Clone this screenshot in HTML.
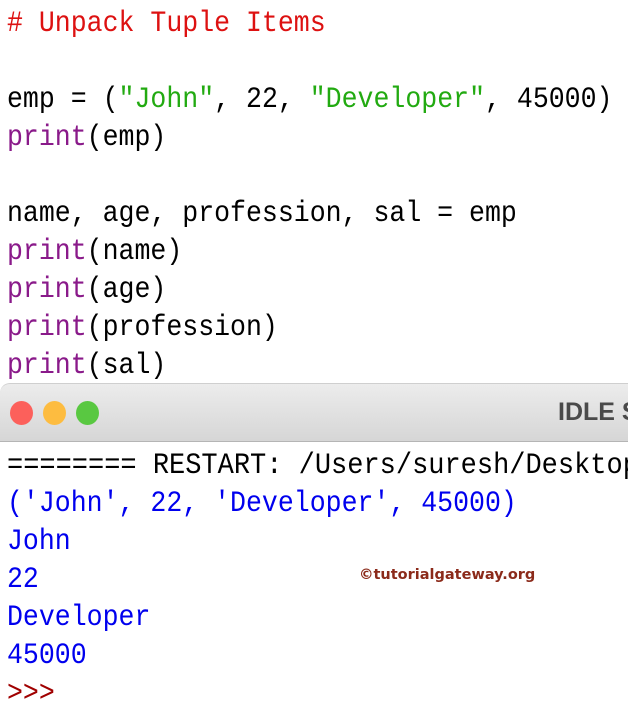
<!DOCTYPE html>
<html><head><style>
body{margin:0;width:628px;height:699px;overflow:hidden;background:#fff;position:relative;font-family:"Liberation Mono",monospace;}
.l{position:absolute;left:7px;font-size:30px;line-height:38px;white-space:pre;color:#000;transform:scaleX(0.885);transform-origin:0 0;}
.r{color:#dd1111}.g{color:#22aa11}.p{color:#8a1a8a}.b{color:#0000ee}.m{color:#a00000}
#bar{position:absolute;left:0;top:383px;width:640px;height:57px;background:linear-gradient(#ececec,#d6d6d6);border-top:1px solid #cfcfcf;border-bottom:1px solid #b5b5b5;border-radius:10px 0 0 0;}
.d{position:absolute;top:17px;width:23px;height:24px;border-radius:50%;}
</style></head><body>
<div class="l r" style="top:5px"># Unpack Tuple Items</div>
<div class="l" style="top:81px">emp = (<span class="g">"John"</span>, 22, <span class="g">"Developer"</span>, 45000)</div>
<div class="l" style="top:119px"><span class="p">print</span>(emp)</div>
<div class="l" style="top:195px">name, age, profession, sal = emp</div>
<div class="l" style="top:233px"><span class="p">print</span>(name)</div>
<div class="l" style="top:271px"><span class="p">print</span>(age)</div>
<div class="l" style="top:309px"><span class="p">print</span>(profession)</div>
<div class="l" style="top:347px"><span class="p">print</span>(sal)</div>
<div id="bar">
<div class="d" style="left:10px;background:#fc605b"></div>
<div class="d" style="left:43px;background:#fdbc40"></div>
<div class="d" style="left:76px;background:#59c841"></div>
<div style="position:absolute;left:558px;top:14px;font-family:'Liberation Sans',sans-serif;font-weight:bold;font-size:25px;color:#4a4a4a">IDLE S</div>
</div>
<div class="l" style="top:447px;transform:scaleX(0.9)">======== RESTART: /Users/suresh/Desktop</div>
<div class="l b" style="top:485px">('John', 22, 'Developer', 45000)</div>
<div class="l b" style="top:523px">John</div>
<div class="l b" style="top:561px">22</div>
<div class="l b" style="top:599px">Developer</div>
<div class="l b" style="top:637px">45000</div>
<div class="l m" style="top:675px">&gt;&gt;&gt;</div>
<div style="position:absolute;left:359px;top:567px;font-family:'DejaVu Sans',sans-serif;font-weight:bold;font-size:14.5px;color:#8b2a1a">©tutorialgateway.org</div>
</body></html>
